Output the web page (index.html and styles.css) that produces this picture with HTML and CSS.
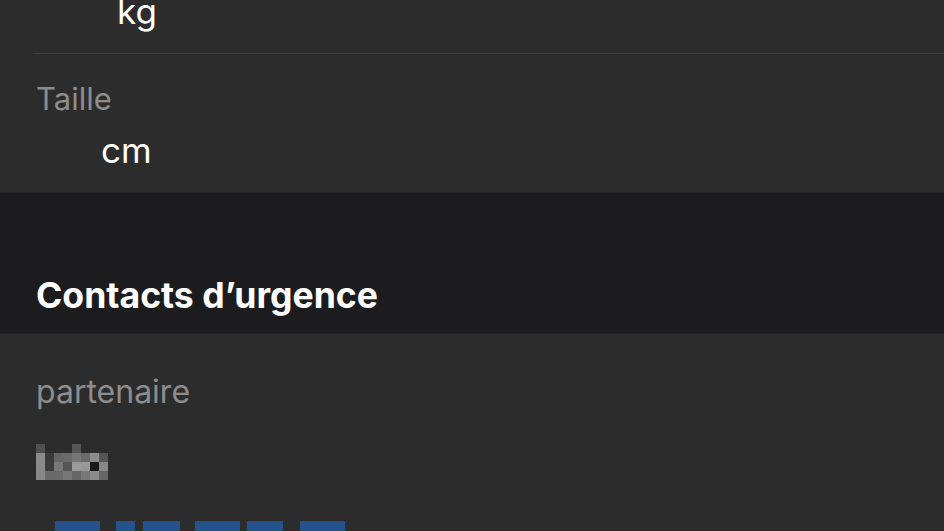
FILE: index.html
```html
<!DOCTYPE html>
<html lang="fr">
<head>
    <meta charset="UTF-8">
    <meta name="viewport" content="width=device-width, initial-scale=1.0">
    <title>Fiche médicale</title>
    <link rel="stylesheet" href="styles.css">
</head>
<body>
    <div class="group">
        <div class="row row-first">
            <div class="value value-kg">kg</div>
        </div>
        <div class="row row-size">
            <div class="label">Taille</div>
            <div class="value value-cm">cm</div>
        </div>
    </div>

    <div class="section-header">
        <h2>Contacts d’urgence</h2>
    </div>

    <div class="group group-contacts">
        <div class="label label-contact">partenaire</div>

        <!-- blurred contact name -->
        <div class="pixels">
            <span style="background:#505050"></span><span></span><span></span><span></span><span style="background:#565656"></span><span></span><span></span><span></span>
            <span style="background:#8a8a8a"></span><span style="background:#3a3a3a"></span><span style="background:#656565"></span><span style="background:#6a6a6a"></span><span style="background:#767676"></span><span style="background:#6a6a6a"></span><span style="background:#8c8c8c"></span><span style="background:#555555"></span>
            <span style="background:#8a8a8a"></span><span style="background:#3c3c3c"></span><span style="background:#777777"></span><span style="background:#555555"></span><span style="background:#9a9a9a"></span><span style="background:#999999"></span><span style="background:#1a1a1a"></span><span style="background:#888888"></span>
            <span style="background:#888888"></span><span style="background:#6a6a6a"></span><span style="background:#6a6a6a"></span><span style="background:#777777"></span><span style="background:#666666"></span><span style="background:#777777"></span><span style="background:#8a8a8a"></span><span style="background:#666666"></span>
        </div>

        <!-- blurred phone number -->
        <div class="phone">
            <span></span>
            <span></span>
            <span></span>
            <span></span>
            <span></span>
            <span></span>
        </div>
    </div>
</body>
</html>
```

FILE: styles.css
```css
body {
    margin: 0;
    background-color: #2c2c2c;
    font-family: Inter, "Noto Sans", sans-serif;
    color: white;
    overflow: hidden;
}
.group {
    background-color: #2c2c2c;
}
.row {
    padding-left: 36px;
}
.row-first {
    display: flow-root;
    margin-left: 33px;
    padding-left: 0;
    height: 53px;
    border-bottom: 1px solid #3d3d3d;
}
.value {
    font-size: 35px;
    line-height: 40px;
}
.value-kg {
    margin-top: -9px;
    padding-left: 84px;
}
.row-size {
    height: 138px;
    padding-top: 27px;
    box-sizing: border-box;
}
.label {
    font-size: 31px;
    line-height: 36px;
    color: #8d8d8d;
}
.value-cm {
    margin-top: 13px;
    padding-left: 65px;
}
.section-header {
    height: 142px;
    box-sizing: border-box;
    background-color: #1c1c1e;
    border-top: 1px solid #232325;
    border-bottom: 1px solid #202021;
    padding: 0 0 17px 36px;
    display: flex;
    align-items: flex-end;
}
.section-header h2 {
    margin: 0;
    font-size: 35.6px;
    line-height: 40px;
    font-weight: 700;
}
.group-contacts {
    padding: 40px 0 0 36px;
}
.label-contact {
    font-size: 32px;
}
.pixels {
    margin-top: 34px;
    display: grid;
    grid-template-columns: repeat(8, 9px);
    grid-auto-rows: 9px;
    width: 72px;
}
.phone {
    margin-top: 41px;
    display: flex;
    padding-left: 19px;
}
.phone span {
    height: 10px;
    background-color: #24528c;
}
.phone span:nth-child(1) { width: 45px; }
.phone span:nth-child(2) { width: 19px; margin-left: 16px; }
.phone span:nth-child(3) { width: 37px; margin-left: 8px; }
.phone span:nth-child(4) { width: 45px; margin-left: 15px; }
.phone span:nth-child(5) { width: 36px; margin-left: 7px; }
.phone span:nth-child(6) { width: 45px; margin-left: 17px; }
```
